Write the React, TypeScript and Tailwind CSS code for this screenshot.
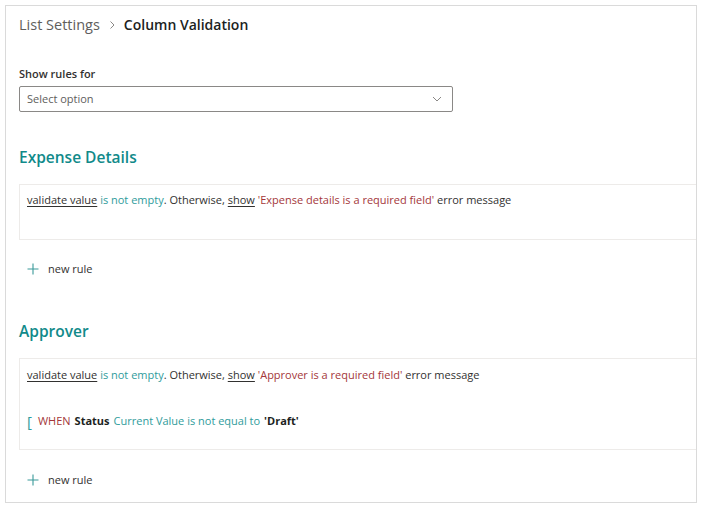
import React from 'react';

const font = { fontFamily: '"Open Sans", "Noto Sans", sans-serif' };

function Plus() {
  return (
    <svg width="12" height="12" viewBox="0 0 12 12" className="text-[#3a9a9a]">
      <path d="M6 0.5v11M0.5 6h11" stroke="currentColor" strokeWidth="1.1" fill="none" />
    </svg>
  );
}

function NewRule() {
  return (
    <button className="flex h-[30px] items-center gap-[9px] pl-[8px] text-[11px] text-[#323130]">
      <Plus />
      <span>new rule</span>
    </button>
  );
}

function Validate({ message }: { message: string }) {
  return (
    <div className="text-[11px] leading-[16px] text-[#323130]">
      <span className="underline underline-offset-2">validate value</span>{' '}
      <span className="text-[#2f9c9c]">is not empty</span>. Otherwise,{' '}
      <span className="underline underline-offset-2">show</span>{' '}
      <span className="text-[#a4373a]">'{message}'</span> error message
    </div>
  );
}

export default function App() {
  return (
    <div className="min-h-screen bg-white p-[5px]" style={font}>
      <div className="h-[498px] w-[692px] border border-[#dadada] pl-[13px] pt-[9px]">
        <div className="flex items-center text-[14.5px] leading-[20px]">
          <span className="text-[#605e5c]">List Settings</span>
          <svg width="7" height="10" viewBox="0 0 7 10" className="ml-[9px] mr-[8px]">
            <path d="M1.5 1.5 5 5 1.5 8.5" stroke="#8a8886" strokeWidth="1" fill="none" />
          </svg>
          <span className="text-[14px] font-semibold text-[#201f1e]">Column Validation</span>
        </div>

        <div className="mt-[31px] text-[11px] font-semibold leading-[16px] text-[#323130]">Show rules for</div>
        <div className="mt-[4px] flex h-[26px] w-[434px] items-center justify-between rounded-[2px] border border-[#8a8886] pl-[7px] pr-[10px] text-[11px] text-[#605e5c]">
          <span>Select option</span>
          <svg width="10" height="6" viewBox="0 0 10 6">
            <path d="M1 1l4 4 4-4" stroke="#8a8886" strokeWidth="1" fill="none" />
          </svg>
        </div>

        <h2 className="mt-[33px] text-[15.5px] font-semibold leading-[24px] text-[#118a8a]">Expense Details</h2>
        <div className="mt-[15px] h-[56px] border border-r-0 border-[#edebe9] px-[7px] pt-[7px]">
          <Validate message="Expense details is a required field" />
        </div>
        <div className="mt-[14px]">
          <NewRule />
        </div>

        <h2 className="mt-[35px] text-[15.5px] font-semibold leading-[24px] text-[#118a8a]">Approver</h2>
        <div className="mt-[15px] h-[92px] border border-r-0 border-[#edebe9] px-[7px] pt-[8px]">
          <Validate message="Approver is a required field" />
          <div className="mt-[30px] flex items-center text-[11px] leading-[16px]">
            <span className="mr-[6px] text-[15px] leading-[16px] text-[#2f9c9c]">[</span>
            <span className="text-[#a4373a]">WHEN</span>
            <span className="ml-[4px] font-bold text-[#201f1e]">Status</span>
            <span className="ml-[4px] text-[#2f9c9c]">Current Value is not equal to</span>
            <span className="ml-[4px] font-bold text-[#201f1e]">'Draft'</span>
          </div>
        </div>
        <div className="mt-[15px]">
          <NewRule />
        </div>
      </div>
    </div>
  );
}
